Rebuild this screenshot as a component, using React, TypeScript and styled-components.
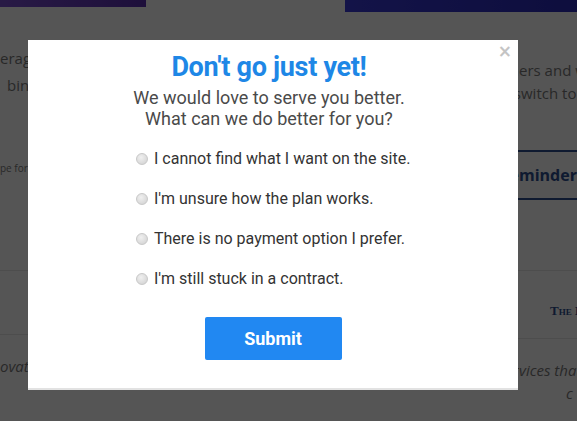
import React from "react";
import styled, { createGlobalStyle } from "styled-components";

const Global = createGlobalStyle`
  html, body { margin: 0; padding: 0; }
  body { width: 577px; height: 421px; overflow: hidden; background: #fff; font-family: "Open Sans", "Liberation Sans", sans-serif; }
`;

const Page = styled.div`
  position: relative;
  width: 577px;
  height: 421px;
  overflow: hidden;
  background: #fff;
`;

const TopBar = styled.div`
  display: flex;
  justify-content: space-between;
  align-items: flex-start;
`;

const Banner = styled.div<{ $w: number; $h: number; $bg: string }>`
  width: ${(p) => p.$w}px;
  height: ${(p) => p.$h}px;
  background: ${(p) => p.$bg};
`;

const Columns = styled.div`
  display: grid;
  grid-template-columns: 200px 167px 210px;
`;

const Col = styled.div`
  display: flex;
  flex-direction: column;
  overflow: hidden;
  min-width: 0;
`;

/* A line of page text; `$x` is where the part that shows past the popup begins. */
const BgText = styled.div<{ $size?: number; $x: number; $italic?: boolean; $mt?: number }>`
  font-size: ${(p) => p.$size ?? 15}px;
  line-height: ${(p) => (p.$size ?? 15) + 8}px;
  color: #7a7a7a;
  white-space: nowrap;
  font-style: ${(p) => (p.$italic ? "italic" : "normal")};
  margin-top: ${(p) => p.$mt ?? 0}px;
  margin-left: ${(p) => p.$x - 60}px;
`;

const Pre = styled.span`
  display: inline-block;
  width: 60px;
  text-align: right;
  overflow: hidden;
  vertical-align: bottom;
  white-space: pre;
`;

const Rule = styled.div<{ $mt: number }>`
  margin-top: ${(p) => p.$mt}px;
  height: 1px;
  background: #e6e6e6;
  flex: none;
`;

const ReminderBox = styled.div`
  margin-top: 45px;
  height: 46px;
  border-top: 2px solid #2e4f8f;
  border-bottom: 2px solid #2e4f8f;
  display: flex;
  align-items: center;
  font-family: "Open Sans", sans-serif;
  font-weight: 700;
  font-size: 16px;
  color: #2e4f8f;
  white-space: nowrap;
  flex: none;
`;

const ReminderLabel = styled.span`
  margin-left: 92px;
  flex: none;
`;

const Serif = styled.div`
  margin-top: 32px;
  margin-left: 183px;
  line-height: 15px;
  font-family: "Liberation Serif", serif;
  font-variant: small-caps;
  font-weight: 700;
  font-size: 13px;
  color: #2e4f8f;
  white-space: nowrap;
`;

const Overlay = styled.div`
  position: absolute;
  inset: 0;
  background: rgba(0, 0, 0, 0.667);
  padding: 40px 0 0 28px;
  box-sizing: border-box;
`;

const Modal = styled.div`
  position: relative;
  width: 490px;
  height: 350px;
  box-sizing: border-box;
  background: #fff;
  border-bottom: 2px solid #e2e2e2;
  display: flex;
  flex-direction: column;
  align-items: center;
  padding-top: 12px;
  font-family: Roboto, "Liberation Sans", sans-serif;
`;

const Close = styled.div`
  position: absolute;
  top: 1px;
  right: 6px;
  font-family: "DejaVu Sans", sans-serif;
  font-size: 17px;
  font-weight: 700;
  color: #c4c4c4;
`;

const Title = styled.h1`
  margin: 0 8px 0 0;
  font-size: 27px;
  line-height: 31px;
  font-weight: 700;
  color: #1e87e6;
  letter-spacing: -0.3px;
`;

const Sub = styled.p`
  margin: 4px 8px 0 0;
  font-size: 18px;
  line-height: 21px;
  color: #4a4a4a;
  text-align: center;
`;

const Options = styled.div`
  align-self: flex-start;
  margin: 18px 0 0 108px;
  display: flex;
  flex-direction: column;
  gap: 17px;
`;

const Option = styled.label`
  display: flex;
  align-items: center;
  gap: 6px;
  font-size: 16px;
  line-height: 23px;
  color: #333;
`;

const Radio = styled.span`
  width: 10px;
  height: 10px;
  border-radius: 50%;
  border: 1px solid #c8c8c8;
  background: radial-gradient(circle at 40% 35%, #f0f0f0, #cfcfcf);
  flex: none;
`;

const Submit = styled.button`
  margin-top: 27px;
  width: 137px;
  height: 43px;
  border: none;
  border-radius: 2px;
  background: #2188f2;
  color: #fff;
  font-family: Roboto, sans-serif;
  font-weight: 700;
  font-size: 18px;
  cursor: pointer;
`;

const options = [
  "I cannot find what I want on the site.",
  "I'm unsure how the plan works.",
  "There is no payment option I prefer.",
  "I'm still stuck in a contract.",
];

export default function App() {
  return (
    <Page>
      <Global />
      <TopBar>
        <Banner $w={146} $h={7} $bg="linear-gradient(90deg,#7a4fd0,#5a2fb0)" />
        <Banner $w={232} $h={12} $bg="linear-gradient(90deg,#3a3ad8,#2a2ab8)" />
      </TopBar>
      <Columns>
        <Col>
          <BgText $mt={35} $x={0}><Pre>lev</Pre>erage our</BgText>
          <BgText $x={7} $mt={4}><Pre />binge</BgText>
          <BgText $size={10} $mt={62} $x={0}><Pre>ty</Pre>pe for</BgText>
          <Rule $mt={93} />
          <Rule $mt={63} />
          <BgText $italic $mt={20} $x={0}><Pre>inn</Pre>ovative</BgText>
        </Col>
        <Col />
        <Col>
          <BgText $mt={47} $x={152}><Pre>Custom</Pre>ers and we</BgText>
          <BgText $x={154}><Pre>s</Pre>witch to</BgText>
          <ReminderBox>
            <ReminderLabel>
              <Pre>Set Re</Pre>minder
            </ReminderLabel>
          </ReminderBox>
          <Rule $mt={70} />
          <Serif>The Best</Serif>
          <Rule $mt={20} />
          <BgText $italic $mt={20} $x={152}><Pre>ser</Pre>vices that</BgText>
          <BgText $italic $x={199}><Pre />c</BgText>
        </Col>
      </Columns>
      <Overlay>
        <Modal>
          <Close>×</Close>
          <Title>Don't go just yet!</Title>
          <Sub>
            We would love to serve you better.
            <br />
            What can we do better for you?
          </Sub>
          <Options>
            {options.map((o) => (
              <Option key={o}>
                <Radio />
                {o}
              </Option>
            ))}
          </Options>
          <Submit>Submit</Submit>
        </Modal>
      </Overlay>
    </Page>
  );
}
